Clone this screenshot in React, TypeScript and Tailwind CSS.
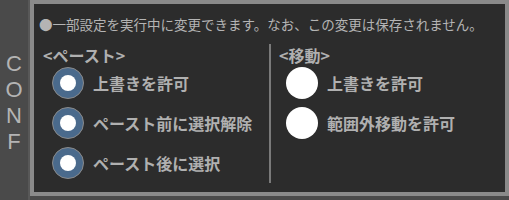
const JP = { fontFamily: '"Noto Sans CJK JP", "Noto Sans", sans-serif' };

type Opt = { label: string; on: boolean };

const PASTE: Opt[] = [
  { label: "上書きを許可", on: true },
  { label: "ペースト前に選択解除", on: true },
  { label: "ペースト後に選択", on: true },
];

const MOVE: Opt[] = [
  { label: "上書きを許可", on: false },
  { label: "範囲外移動を許可", on: false },
];

function Radio({ on }: { on: boolean }) {
  if (!on) {
    return <div className="w-[32px] h-[32px] rounded-full bg-white shrink-0" />;
  }
  return (
    <div className="w-[32px] h-[32px] rounded-full bg-[#4a6a8c] border border-[#8a8a8a] flex items-center justify-center shrink-0">
      <div className="w-[16px] h-[16px] rounded-full bg-white" />
    </div>
  );
}

function Group({ title, items, indent }: { title: string; items: Opt[]; indent: string }) {
  return (
    <div className="flex flex-col pt-[2px]">
      <div className="h-[18px] leading-[18px] text-[16px] font-bold text-[#b0b0b0]">{title}</div>
      <div className={`flex flex-col gap-[8px] mt-[3px] ${indent}`}>
        {items.map((it, i) => (
          <div key={i} className="flex items-center gap-[9px]">
            <Radio on={it.on} />
            <span className="text-[16px] font-bold text-[#b0b0b0] leading-none">{it.label}</span>
          </div>
        ))}
      </div>
    </div>
  );
}

export default function App() {
  return (
    <div className="w-[509px] h-[200px] bg-[#4a4a4a] flex overflow-hidden" style={JP}>
      <div
        className="w-[28px] flex flex-col items-center pt-[51px] text-[22px] leading-[26px] text-[#b4b4b4]"
        style={{ fontFamily: '"Liberation Sans", sans-serif' }}
      >
        <span>C</span>
        <span>O</span>
        <span>N</span>
        <span>F</span>
      </div>
      <div className="w-[2px] bg-[#585858]" />
      <div className="w-[479px] h-[196px] border-4 border-[#8a8a8a] bg-[#2c2c2c] flex flex-col">
        <div className="pt-[10px] pl-[5px] h-[40px] text-[13.5px] leading-[20px] text-[#b4b4b4] whitespace-nowrap">
          ●一部設定を実行中に変更できます。なお、この変更は保存されません。
        </div>
        <div className="flex">
          <div className="w-[235px] pl-[9px]">
            <Group title="<ペースト>" items={PASTE} indent="ml-[9px]" />
          </div>
          <div className="w-[2px] h-[139px] bg-[#7a7a7a]" />
          <div className="pl-[8px]">
            <Group title="<移動>" items={MOVE} indent="ml-[7px]" />
          </div>
        </div>
      </div>
    </div>
  );
}
